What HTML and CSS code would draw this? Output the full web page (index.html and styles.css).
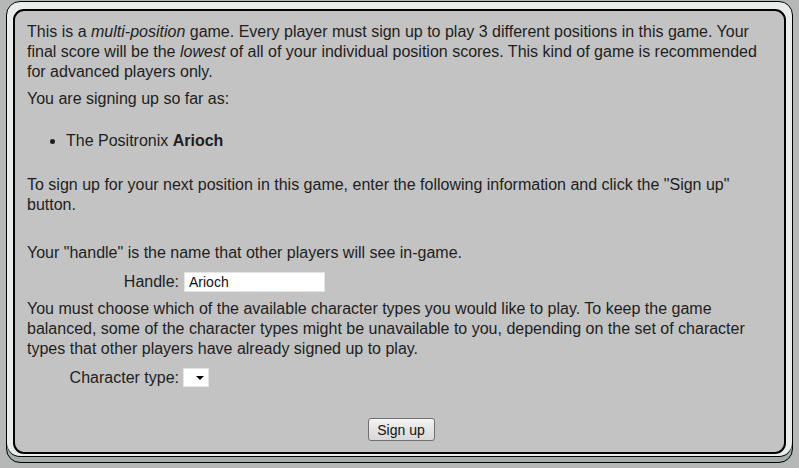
FILE: index.html
```html
<!DOCTYPE html>
<html lang="en">
<head>
  <meta charset="UTF-8">
  <title>Sign up</title>
  <link rel="stylesheet" href="styles.css">
</head>
<body>
  <div class="frame">
    <div class="panel">
      <p>This is a <em>multi-position</em> game. Every player must sign up to play 3 different positions in this game. Your final score will be the <em>lowest</em> of all of your individual position scores. This kind of game is recommended for advanced players only.</p>
      <p>You are signing up so far as:</p>
      <ul class="positions">
        <li>The Positronix <b>Arioch</b></li>
      </ul>
      <p>To sign up for your next position in this game, enter the following information and click the "Sign up" button.</p>

      <p class="gap">Your "handle" is the name that other players will see in-game.</p>
      <div class="field">
        <label for="handle">Handle:</label>
        <input type="text" id="handle" value="Arioch" />
      </div>
      <p>You must choose which of the available character types you would like to play. To keep the game balanced, some of the character types might be unavailable to you, depending on the set of character types that other players have already signed up to play.</p>
      <div class="field">
        <label for="ctype">Character type:</label>
        <span class="select-wrap"><select id="ctype"></select></span>
      </div>

      <div class="actions">
        <button type="button">Sign up</button>
      </div>
    </div>
  </div>
</body>
</html>
```

FILE: styles.css
```css
body {
  margin: 0;
  padding: 1px 6px 6px 6px;
  background-color: #b6b8b7;
  font-family: 'Liberation Sans', Arial, sans-serif;
  font-size: 16px;
  color: #1e1e1e;
}
.frame {
  height: 453px;
  border: 1px solid #000;
  border-radius: 14px;
  background-color: #e8eceb;
  padding: 7px 6px 0 6px;
  box-shadow: inset 0 -5px 0 #a3aeaa, inset 0 -6px 0 #000;
}
.panel {
  height: 441px;
  border: 2px solid #000;
  border-radius: 11px;
  background-color: #c3c3c3;
  padding: 0 14px 0 12px;
}
.panel p {
  margin: 0 0 7px 0;
  line-height: 20px;
}
.panel p:first-child {
  padding-top: 11px;
}
.positions {
  margin: 22px 0 24px 0;
  padding-left: 39px;
  line-height: 20px;
}
.panel p.gap {
  margin-top: 28px;
}
.field {
  display: flex;
  align-items: center;
  margin: 9px 0 7px 0;
}
.field label {
  width: 152px;
  text-align: right;
  margin-right: 5px;
}
.field input {
  width: 141px;
  height: 20px;
  box-sizing: border-box;
  border: 1px solid #e4e4e4;
  padding: 1px 4px;
  font-family: 'Liberation Sans', Arial, sans-serif;
  font-size: 14px;
  color: #111;
}
.select-wrap {
  position: relative;
  display: inline-block;
  height: 19px;
  margin-left: -1px;
}
.select-wrap select {
  appearance: none;
  -webkit-appearance: none;
  display: block;
  width: 26px;
  height: 19px;
  border: 1px solid #e4e4e4;
  background: #fff;
  padding: 0;
}
.select-wrap::after {
  content: "";
  position: absolute;
  left: 13px;
  top: 8px;
  border-left: 4px solid transparent;
  border-right: 4px solid transparent;
  border-top: 4px solid #000;
  pointer-events: none;
}
.actions {
  text-align: center;
  margin-top: 31px;
}
button {
  width: 67px;
  height: 23px;
  font-family: 'Liberation Sans', Arial, sans-serif;
  font-size: 14px;
  color: #111;
  border: 1px solid #707070;
  border-radius: 3px;
  background: linear-gradient(#f4f4f4, #e4e4e4 50%, #d8d8d8);
  padding: 0;
  margin-left: 5px;
}
```
